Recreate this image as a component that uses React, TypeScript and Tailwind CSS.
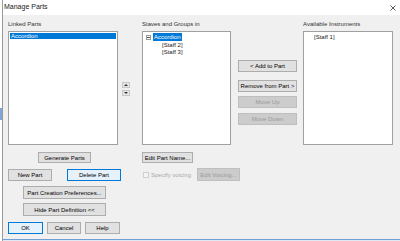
const Btn = ({
	label,
	w,
	h = 'h-[12px]',
	focus = false,
	disabled = false,
	className = '',
}: {
	label: string;
	w: string;
	h?: string;
	focus?: boolean;
	disabled?: boolean;
	className?: string;
}) => (
	<div
		className={`${w} ${h} ${className} flex items-center justify-center border text-[6px] leading-none whitespace-nowrap ${
			disabled
				? 'bg-[#cccccc] border-[#bfbfbf] text-[#9a9a9a]'
				: focus
					? 'bg-[#e5f1fb] border-[#0078d7] text-black'
					: 'bg-[#e1e1e1] border-[#adadad] text-black'
		}`}
	>
		{label}
	</div>
);

const ArrowBtn = ({ up }: { up: boolean }) => (
	<div className="w-[8px] h-[6px] flex items-center justify-center border border-[#c8c8c8] bg-[#e6e6e6]">
		<svg width="6" height="4" viewBox="0 0 6 4">
			{up ? <path d="M1 3 L3 1 L5 3 Z" fill="#333" /> : <path d="M1 1 L3 3 L5 1 Z" fill="#333" />}
		</svg>
	</div>
);

export default function App() {
	return (
		<div className="flex w-[400px] h-[241px] overflow-hidden bg-white font-['Liberation_Sans',Arial,sans-serif] text-black">
			<div className="flex flex-col w-[2px]">
				<div className="h-[108px] bg-white" />
				<div className="h-[12px] bg-[#7fa6d6]" />
				<div className="flex-1 bg-white" />
			</div>
			<div className="flex-1 flex flex-col border-l border-[#9a9a9a]">
				<div className="h-[15px] bg-white flex items-center justify-between pl-[1px] pr-[4px]">
					<span className="text-[7px] text-[#222]">Manage Parts</span>
					<svg width="6" height="6" viewBox="0 0 6 6">
						<path d="M0.5 0.5 L5.5 5.5 M5.5 0.5 L0.5 5.5" stroke="#333" strokeWidth="0.8" />
					</svg>
				</div>
				<div className="flex-1 bg-[#f0f0f0] pl-[5px] pt-[5px] flex flex-col text-[6px] leading-none">
					<div className="flex">
						<div className="w-[110px] flex flex-col">
							<div className="h-[11px] pt-[1px] text-[#333]">Linked Parts</div>
							<div className="h-[114px] bg-white border border-[#a0a0a0] p-[1px]">
								<div className="h-[6px] bg-[#0078d7] text-white pl-[1px] flex items-center">Accordion</div>
							</div>
						</div>
						<div className="ml-[4px] w-[8px] pt-[62px] flex flex-col gap-[2px]">
							<ArrowBtn up />
							<ArrowBtn up={false} />
						</div>
						<div className="ml-[12px] w-[89px] flex flex-col">
							<div className="h-[11px] pt-[1px] text-[#333]">Staves and Groups in</div>
							<div className="h-[114px] bg-white border border-[#a0a0a0] pl-[3px] pt-[1px] flex flex-col">
								<div className="flex items-center h-[8px]">
									<div className="w-[5px] h-[5px] border border-[#999] flex items-center justify-center">
										<div className="w-[3px] h-[1px] bg-[#555]" />
									</div>
									<span className="ml-[2px] bg-[#0078d7] text-white px-[1px] h-[8px] flex items-center">Accordion</span>
								</div>
								<div className="pl-[16px] h-[7px] flex items-center text-[#222]">[Staff 2]</div>
								<div className="pl-[16px] h-[7px] flex items-center text-[#222]">[Staff 3]</div>
							</div>
						</div>
						<div className="ml-[7px] w-[59px] pt-[40px] flex flex-col">
							<Btn label="< Add to Part" w="w-[59px]" />
							<Btn label="Remove from Part >" w="w-[59px]" className="mt-[8px]" />
							<Btn label="Move Up" w="w-[59px]" disabled className="mt-[4px]" />
							<Btn label="Move Down" w="w-[59px]" disabled className="mt-[5px]" />
						</div>
						<div className="ml-[6px] w-[90px] flex flex-col">
							<div className="h-[11px] pt-[1px] text-[#333]">Available Instruments</div>
							<div className="h-[114px] bg-white border border-[#a0a0a0] pl-[10px] pt-[2px]">
								<div className="h-[6px] flex items-center text-[#222]">[Staff 1]</div>
							</div>
						</div>
					</div>
					<div className="flex">
						<div className="w-[113px] flex flex-col">
							<Btn label="Generate Parts" w="w-[53px]" h="h-[11px]" className="ml-[30px] mt-[7px]" />
							<div className="flex mt-[6px] gap-[15px]">
								<Btn label="New Part" w="w-[44px]" />
								<Btn label="Delete Part" w="w-[54px]" focus />
							</div>
							<Btn label="Part Creation Preferences..." w="w-[83px]" h="h-[13px]" className="ml-[15px] mt-[5px]" />
							<Btn label="Hide Part Definition <<" w="w-[83px]" h="h-[13px]" className="ml-[15px] mt-[4px]" />
							<div className="flex mt-[6px] gap-[4px]">
								<Btn label="OK" w="w-[35px]" focus />
								<Btn label="Cancel" w="w-[34px]" />
								<Btn label="Help" w="w-[35px]" />
							</div>
						</div>
						<div className="ml-[21px] flex flex-col">
							<Btn label="Edit Part Name..." w="w-[51px]" h="h-[11px]" className="mt-[7px]" />
							<div className="flex items-center mt-[5px]">
								<div className="ml-[1px] w-[6px] h-[6px] border border-[#cfcfcf] bg-[#f4f4f4]" />
								<span className="ml-[2px] text-[#a8a8a8]">Specify voicing</span>
								<Btn label="Edit Voicing..." w="w-[43px]" h="h-[13px]" disabled className="ml-[6px]" />
							</div>
						</div>
					</div>
				</div>
				<div className="h-[1px] bg-[#6f9fd4]" />
				<div className="h-[1px] bg-[#dfe8f3]" />
			</div>
		</div>
	);
}
